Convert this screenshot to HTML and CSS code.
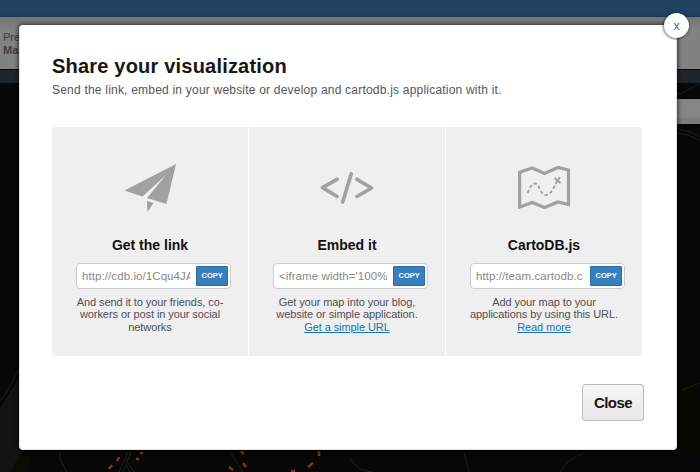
FILE: index.html
```html
<!DOCTYPE html>
<html lang="en">
<head>
<meta charset="utf-8">
<title>Share your visualization</title>
<link rel="stylesheet" href="styles.css">
</head>
<body>
<div class="page">
  <div class="topbar"></div>
  <div class="header">
    <span>Preview</span>
    <b>Map view</b>
  </div>
  <div class="toolbar"></div>
  <div class="map">
    <svg class="map-art" viewBox="0 83 700 389" width="700" height="389" fill="none">
      <path d="M0 410Q12 391 20 380V460L12 472H0Z" fill="#121212"/>
      <path d="M588 452H700V400L677 360V452Z" fill="#080903"/>
      <path d="M0 401Q9 390 20 367M0 409Q10 396 20 378M60 452V459L67 472M119 472L128 452M123 472L131 452M126 465L130 472M126 452V460L134 472M230 452L243 472M350 458Q357 471 372 472M464 453L469 472M560 472Q568 458 584 453M678 94Q686 92 700 83M678 133Q690 134 700 141M678 129Q690 130 700 137M682 390L700 383" stroke="#1f1f1f"/>
      <path d="M12 472Q15 455 31 453L28 472Z" fill="#090d03"/>
      <path d="M119 457L117 461M112 465L109 469M140 453h3M136 459h3M241 451l3 3M243 463l3 4M229 467l4 3M319 451v5M313 463l-5 4M291 471h4" stroke="#813508" stroke-width="2.500"/>
    </svg>
    <div class="search"></div>
  </div>
</div>

<section class="modal">
  <button class="dismiss">x</button>
  <h1>Share your visualization</h1>
  <p class="lead">Send the link, embed in your website or develop and cartodb.js application with it.</p>
  <div class="options">
    <article class="option">
      <svg class="icon" viewBox="0 0 60 60" width="60" height="60" fill="#a1a1a1">
        <path d="M56 7L4.500 33.500L22.500 39.500L46 18L27 41L46.500 47Z"/>
        <path d="M27 44L33.500 46L27.300 55Z"/>
      </svg>
      <h2>Get the link</h2>
      <div class="field"><span class="value">http://cdb.io/1Cqu4JA</span><button class="copy">COPY</button></div>
      <p>And send it to your friends, co-<br>workers or post in your social<br>networks</p>
    </article>
    <article class="option">
      <svg class="icon" viewBox="0 0 60 60" width="60" height="60" fill="none" stroke="#a1a1a1" stroke-width="3.700" stroke-linecap="round" stroke-linejoin="round">
        <path d="M20 22.300L5.500 30.700L20 39.500M34.200 17L25.700 45M40 22.300L54.500 31L40 39.500"/>
      </svg>
      <h2>Embed it</h2>
      <div class="field"><span class="value">&lt;iframe width='100%</span><button class="copy">COPY</button></div>
      <p>Get your map into your blog,<br>website or simple application.<br><a href="#">Get a simple URL</a></p>
    </article>
    <article class="option">
      <svg class="icon" viewBox="0 0 60 60" width="60" height="60" fill="none" stroke="#a1a1a1" stroke-width="3.200">
        <path d="M5.600 15.300L18.300 11L30.500 16.500L44 10.500L54.500 13V47.500L44 45L30.500 50.500L18.300 45.500L5.600 50Z"/>
        <path d="M13.500 36C16 31 17.500 26.500 21 26.500C25.500 26.500 26 38 32 38C37 38 39 31 42 27.500" stroke-width="1.900" stroke-dasharray="3.300 2.300"/>
        <path d="M40.500 21L46.500 26M46 20L41.500 27" stroke-width="2"/>
      </svg>
      <h2>CartoDB.js</h2>
      <div class="field"><span class="value">http://team.cartodb.c</span><button class="copy">COPY</button></div>
      <p>Add your map to your<br>applications by using this URL.<br><a href="#">Read more</a></p>
    </article>
  </div>
  <div class="footer"><button class="close">Close</button></div>
</section>
</body>
</html>
```

FILE: styles.css
```css
* { box-sizing: border-box; }
body {
  margin: 0;
  width: 700px;
  height: 472px;
  overflow: hidden;
  position: relative;
  background: #070707;
  font-family: "Liberation Sans", Arial, sans-serif;
}
button { font-family: inherit; padding: 0; }
.topbar { height: 17px; background: linear-gradient(#20435f, #1e4361 85%, #193a54); }
.header {
  height: 53px;
  padding: 14px 0 0 3px;
  display: flex;
  flex-direction: column;
  background: linear-gradient(#747474, #828282 12px);
  border-bottom: 1px solid #050505;
  color: #3e3e3e;
  font-size: 11px;
  line-height: 13px;
  white-space: nowrap;
}
.toolbar { height: 13px; background: #20252a; }
.map { height: 389px; position: relative; padding-top: 16px; }
.map-art { position: absolute; left: 0; top: 0; }
.search {
  position: relative;
  margin-left: 600px;
  height: 25px;
  background: #858585;
  border-bottom: 6px solid #7b7b7b;
}
.modal {
  position: absolute;
  left: 19px;
  top: 25px;
  width: 658px;
  height: 425px;
  padding: 29px 34px 0 32px;
  border: solid #e3e3e3;
  border-width: 0 1px 1px;
  border-radius: 4px;
  background: #fff;
  box-shadow: 0 0 4px 1px rgba(0, 0, 0, .65);
}
.dismiss {
  position: absolute;
  right: -13px;
  top: -12px;
  width: 25px;
  height: 25px;
  border: 0;
  border-radius: 50%;
  background: #fff;
  color: #1674b5;
  font-size: 12px;
  line-height: 24px;
  box-shadow: -1px 1px 0 1px rgba(0, 0, 0, .16), 0 0 3px rgba(0, 0, 0, .6);
}
h1 {
  margin: 0;
  font-size: 20px;
  line-height: 24px;
  letter-spacing: .2px;
  color: #161616;
  white-space: nowrap;
}
.lead {
  margin: 3px 0 0;
  font-size: 12px;
  line-height: 18px;
  letter-spacing: .21px;
  color: #555;
  white-space: nowrap;
}
.options {
  margin-top: 28px;
  height: 229px;
  display: grid;
  grid-template-columns: repeat(3, 196px);
  gap: 1px;
  border-radius: 4px;
  overflow: hidden;
}
.option {
  display: flex;
  flex-direction: column;
  align-items: center;
  padding-top: 30px;
  background: #efefef;
  text-align: center;
}
.icon { flex: none; }
h2 {
  margin: 19px 0 0;
  font-size: 14px;
  line-height: 18px;
  color: #111;
}
.field {
  align-self: flex-start;
  margin: 9px 0 0 24px;
  width: 155px;
  height: 26px;
  padding: 0 2px 0 5px;
  display: flex;
  align-items: center;
  background: #fff;
  border: 1px solid #ccc;
  border-radius: 4px;
}
.value {
  width: 109px;
  margin-right: 6px;
  overflow: hidden;
  white-space: nowrap;
  text-align: left;
  font-size: 11.5px;
  letter-spacing: .08px;
  color: #888;
}
.copy {
  width: 32px;
  height: 20px;
  border: 1px solid #2a6ea8;
  border-radius: 1px;
  background: #397fbd;
  color: #fff;
  font-size: 7.5px;
  font-weight: bold;
  line-height: 18px;
}
.option p {
  margin: 7px 0 0;
  font-size: 11px;
  line-height: 12.3px;
  letter-spacing: -.08px;
  color: #505050;
  white-space: nowrap;
}
a { color: #1674b5; }
.footer { margin-top: 28px; display: flex; justify-content: flex-end; }
.close {
  width: 62px;
  height: 37px;
  margin-right: -2px;
  border: 1px solid #bcbcbc;
  border-radius: 3px;
  background: linear-gradient(#f6f6f6, #e7e7e7);
  color: #161616;
  font-size: 15px;
  font-weight: bold;
  letter-spacing: -.6px;
}
```
